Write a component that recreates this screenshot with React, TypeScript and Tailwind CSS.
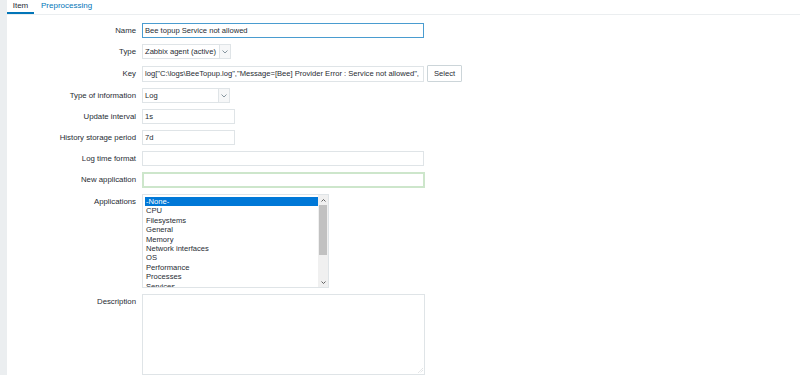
import React from "react";

const font = { fontFamily: '"Liberation Sans", Arial, sans-serif' };

const APPS = [
  "-None-",
  "CPU",
  "Filesystems",
  "General",
  "Memory",
  "Network interfaces",
  "OS",
  "Performance",
  "Processes",
  "Services",
];

function Row({ label, children, top = false }: { label: string; children: React.ReactNode; top?: boolean }) {
  return (
    <div className={`flex ${top ? "items-start" : "items-center"}`}>
      <div className={`w-[129px] shrink-0 whitespace-nowrap text-right text-[7.8px] text-[#1f2c33] ${top ? "pt-[2px]" : ""}`}>
        {label}
      </div>
      <div className="ml-[6px] flex items-center">{children}</div>
    </div>
  );
}

function Field({ w, value = "", className = "" }: { w: string; value?: string; className?: string }) {
  return (
    <div
      className={`${w} h-[15px] overflow-hidden whitespace-nowrap border bg-white px-[2px] text-[7.6px] leading-[13px] text-[#1f2c33] ${
        className || "border-[#dfe4e7]"
      }`}
    >
      {value}
    </div>
  );
}

function Select({ w, value }: { w: string; value: string }) {
  return (
    <div className={`${w} flex h-[15px] items-stretch border border-[#dfe4e7] bg-white text-[7.6px] text-[#1f2c33]`}>
      <div className="flex-1 overflow-hidden whitespace-nowrap px-[2px] leading-[13px]">{value}</div>
      <div className="flex w-[11px] shrink-0 items-center justify-center border-l border-[#dfe4e7] bg-[#f6f7f8]">
        <svg width="6" height="4" viewBox="0 0 6 4">
          <path d="M0.5 0.5 L3 3 L5.5 0.5" fill="none" stroke="#7a8a94" strokeWidth="0.9" />
        </svg>
      </div>
    </div>
  );
}

export default function App() {
  return (
    <div className="flex h-[375px] w-[800px] overflow-hidden bg-white" style={font}>
      <div className="w-[7px] shrink-0 bg-[#ebeef0]" />
      <div className="flex-1">
        {/* Tabs */}
        <div className="flex h-[15px] items-end border-b border-[#ebeef0] text-[8px]">
          <div className="flex h-[15px] w-[27px] items-start justify-center border-b-2 border-[#0275b8] pt-[1px] text-[#1f2c33]">
            Item
          </div>
          <div className="ml-[7px] h-[15px] pt-[1px] text-[#0275b8]">Preprocessing</div>
        </div>

        <div className="flex flex-col gap-[6px] pt-[8px]">
          <Row label="Name">
            <Field w="w-[282px]" value="Bee topup Service not allowed" className="border-[#4a9cd0]" />
          </Row>
          <Row label="Type">
            <Select w="w-[89px]" value="Zabbix agent (active)" />
          </Row>
          <Row label="Key">
            <Field
              w="w-[282px] h-[16px]"
              value={'log["C:\\logs\\BeeTopup.log","Message=[Bee] Provider Error : Service not allowed",'}
            />
            <div className="ml-[3px] flex h-[17px] w-[35px] items-center justify-center rounded-[1px] border border-[#ccd5d9] bg-white text-[7.6px] text-[#1f2c33]">
              Select
            </div>
          </Row>
          <Row label="Type of information">
            <Select w="w-[88px]" value="Log" />
          </Row>
          <Row label="Update interval">
            <Field w="w-[93px]" value="1s" />
          </Row>
          <Row label="History storage period">
            <Field w="w-[93px]" value="7d" />
          </Row>
          <Row label="Log time format">
            <Field w="w-[282px]" />
          </Row>
          <Row label="New application">
            <Field w="w-[283px] h-[16px] border-2" className="border-[#cde6cb]" />
          </Row>
          <Row label="Applications" top>
            <div className="flex h-[94px] w-[187px] border border-[#dfe4e7] bg-white">
              <div className="flex-1 overflow-hidden pl-[2px] pt-[2px] text-[7.6px] text-[#1f2c33]">
                {APPS.map((a, i) => (
                  <div
                    key={a}
                    className={`h-[9.4px] whitespace-nowrap pl-[1px] leading-[9.4px] ${i === 0 ? "bg-[#0078d7] text-white" : ""}`}
                  >
                    {a}
                  </div>
                ))}
              </div>
              <div className="flex w-[10px] flex-col bg-[#f0f0f0]">
                <div className="flex h-[10px] items-center justify-center">
                  <svg width="5" height="3" viewBox="0 0 5 3">
                    <path d="M0.5 2.5 L2.5 0.5 L4.5 2.5" fill="none" stroke="#505050" strokeWidth="0.9" />
                  </svg>
                </div>
                <div className="mx-[1px] h-[50px] bg-[#c1c1c1]" />
                <div className="flex-1" />
                <div className="flex h-[10px] items-center justify-center">
                  <svg width="5" height="3" viewBox="0 0 5 3">
                    <path d="M0.5 0.5 L2.5 2.5 L4.5 0.5" fill="none" stroke="#505050" strokeWidth="0.9" />
                  </svg>
                </div>
              </div>
            </div>
          </Row>
          <Row label="Description" top>
            <div className="relative h-[81px] w-[283px] border border-[#dfe4e7] bg-white">
              <svg className="absolute bottom-[1px] right-[1px]" width="5" height="5" viewBox="0 0 5 5">
                <path d="M4.5 0.5 L0.5 4.5 M4.5 2.5 L2.5 4.5" stroke="#9aa5ab" strokeWidth="0.6" strokeDasharray="0.8 0.8" />
              </svg>
            </div>
          </Row>
        </div>
      </div>
    </div>
  );
}
